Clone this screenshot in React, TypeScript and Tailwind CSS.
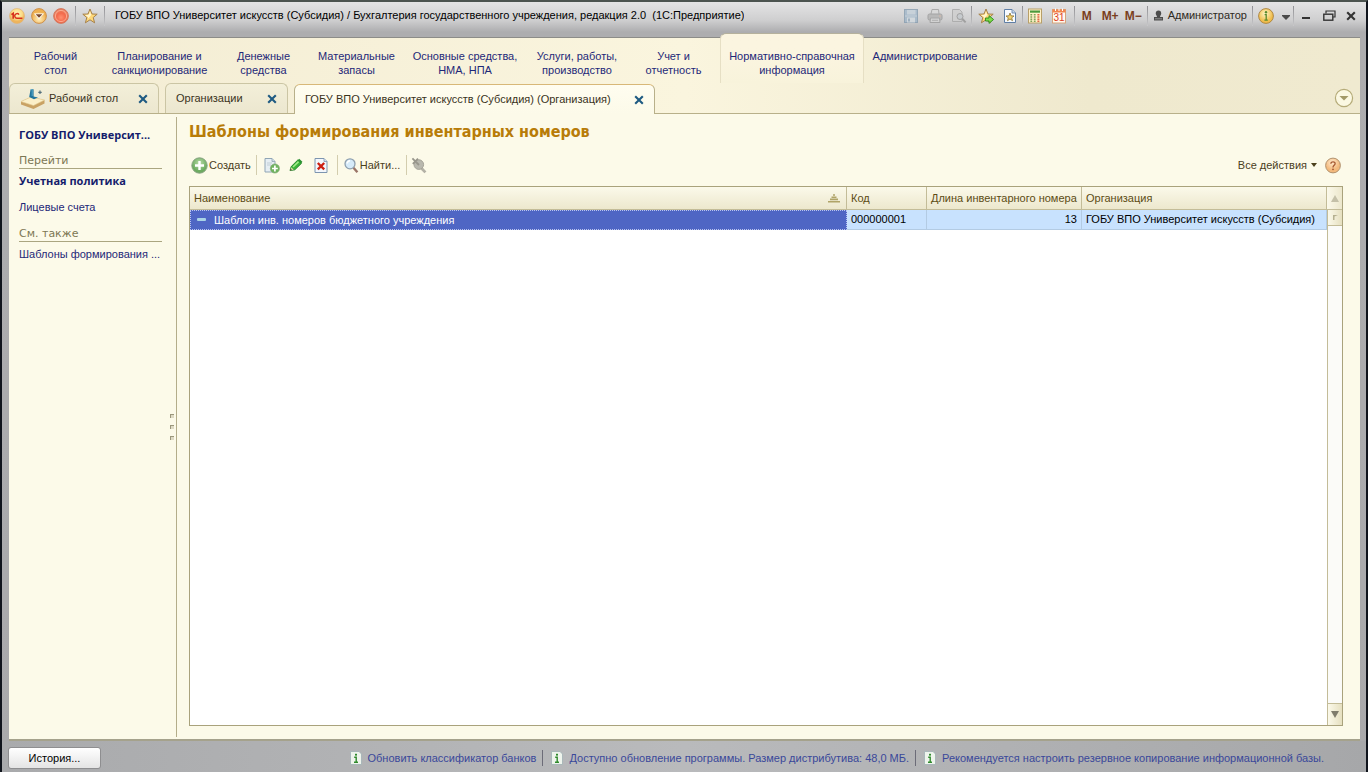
import React from 'react';
import clsx from 'clsx';

const sections = [
  { lines: ['Рабочий', 'стол'] },
  { lines: ['Планирование и', 'санкционирование'], width: 'w-[115px]' },
  { lines: ['Денежные', 'средства'] },
  { lines: ['Материальные', 'запасы'] },
  { lines: ['Основные средства,', 'НМА, НПА'], width: 'w-[124px]' },
  { lines: ['Услуги, работы,', 'производство'], width: 'w-[100px]' },
  { lines: ['Учет и', 'отчетность'] },
  { lines: ['Нормативно-справочная', 'информация'], width: 'w-[144px]', active: true },
  { lines: ['Администрирование'], width: 'w-[122px]' },
];

const messages = [
  'Обновить классификатор банков',
  'Доступно обновление программы. Размер дистрибутива: 48,0 МБ.',
  'Рекомендуется настроить резервное копирование информационной базы.',
];

const rows = [
  {
    name: 'Шаблон инв. номеров бюджетного учреждения',
    code: '000000001',
    length: 13,
    org: 'ГОБУ ВПО Университет искусств (Субсидия)',
  },
];

const OneCIcon = () => (
  <svg width="16" height="16" viewBox="0 0 16 16">
    <defs>
      <radialGradient id="logo" cx="50%" cy="35%">
        <stop offset="0" stopColor="#fff3b8" />
        <stop offset="0.7" stopColor="#fbdc86" />
        <stop offset="1" stopColor="#eeb45c" />
      </radialGradient>
    </defs>
    <circle cx="8" cy="8" r="7.5" fill="url(#logo)" stroke="#e0b070" strokeWidth="0.6" />
    <path d="M2.4 6.6 L4.2 5.4 V10.8" fill="none" stroke="#d8321c" strokeWidth="1.7" />
    <path d="M10 6.7 A2.3 2.3 0 1 0 8.4 10.2 H13.4" fill="none" stroke="#d8321c" strokeWidth="1.4" />
  </svg>
);

const MenuBall = () => (
  <svg width="16" height="16" viewBox="0 0 16 16">
    <defs>
      <radialGradient id="ball" cx="50%" cy="70%">
        <stop offset="0" stopColor="#fff0c0" />
        <stop offset="1" stopColor="#eeb050" />
      </radialGradient>
    </defs>
    <circle cx="8" cy="8" r="7.4" fill="url(#ball)" stroke="#c98a45" strokeWidth="0.9" />
    <path d="M2.8 5.4 H13.2 L8 11 Z" fill="#fff" />
    <path d="M4.6 6.3 H11.4 L8 9.8 Z" fill="#7d4a2a" />
  </svg>
);

const RedBall = () => (
  <svg width="16" height="16" viewBox="0 0 16 16">
    <defs>
      <radialGradient id="red" cx="50%" cy="60%">
        <stop offset="0" stopColor="#ff9070" />
        <stop offset="0.6" stopColor="#f36a4c" />
        <stop offset="1" stopColor="#e88060" />
      </radialGradient>
    </defs>
    <circle cx="8" cy="8" r="7.4" fill="url(#red)" stroke="#d0745a" strokeWidth="0.9" />
    <circle cx="8" cy="8" r="5.6" fill="none" stroke="#ffb59a" strokeWidth="0.8" />
  </svg>
);

const Star = ({ arrow = false }: { arrow?: boolean }) => (
  <svg width="16" height="16" viewBox="0 0 16 16">
    <path
      d="M8 1 L10 6 L15.2 6.2 L11.2 9.5 L12.6 14.8 L8 11.8 L3.4 14.8 L4.8 9.5 L0.8 6.2 L6 6 Z"
      fill="#ffd97a"
      stroke="#a5804a"
      strokeWidth="1"
      strokeLinejoin="round"
    />
    <path d="M8 3.2 L9.2 7 L6.2 10.4 L5.9 9 L3 7 L6.8 6.8 Z" fill="#fff6cf" />
    {arrow && (
      <path d="M7.5 10 H11 V7.6 L15.6 11.5 L11 15.4 V13 H7.5 Z" fill="#7fdc4a" stroke="#2c8a1c" strokeWidth="0.9" />
    )}
  </svg>
);

const SaveIcon = () => (
  <svg width="16" height="16" viewBox="0 0 16 16" opacity="0.75">
    <rect x="1.5" y="1.5" width="13" height="13" fill="#9db4c8" stroke="#8199ad" />
    <rect x="4" y="2" width="8.5" height="4.5" fill="#c3d0da" />
    <path d="M2 8 H14" stroke="#c3d0da" />
    <rect x="4" y="9.5" width="8" height="5" fill="#d3dbe1" />
    <rect x="5" y="10.5" width="2" height="3" fill="#8fa6b9" />
  </svg>
);

const PrintIcon = () => (
  <svg width="16" height="16" viewBox="0 0 16 16" opacity="0.8">
    <path d="M4 6 L5 1.5 H11.5 L12 6" fill="#d9d9d9" stroke="#a0a0a0" />
    <rect x="1" y="6" width="14" height="6" rx="1.5" fill="#b3b3b3" stroke="#989898" />
    <path d="M3.5 10 H12.5 L13 14.5 H3 Z" fill="#d4d4d4" stroke="#9c9c9c" />
    <path d="M5 12.3 H11" stroke="#a8a8a8" />
    <circle cx="13" cy="8" r="0.7" fill="#e0b090" />
  </svg>
);

const PreviewIcon = () => (
  <svg width="16" height="16" viewBox="0 0 16 16" opacity="0.8">
    <path d="M1.5 1.5 H8.5 L11 4 V13.5 H1.5 Z" fill="#cfcfcf" stroke="#a6a6a6" />
    <circle cx="9" cy="8.5" r="3" fill="#c4c9cd" stroke="#959595" />
    <path d="M11.2 10.8 L14.6 14.4" stroke="#959595" strokeWidth="2" />
  </svg>
);

const FavPageIcon = () => (
  <svg width="14" height="16" viewBox="0 0 14 16">
    <path d="M1.5 1.5 H9 L12.5 5 V14.5 H1.5 Z" fill="#f8fbff" stroke="#5f7fa6" />
    <path d="M9 1.5 V5 H12.5" fill="#c5d7ea" stroke="#5f7fa6" strokeWidth="0.8" />
    <path d="M7 5 L8 7.8 L11 8 L8.7 9.8 L9.5 12.7 L7 11 L4.5 12.7 L5.3 9.8 L3 8 L6 7.8 Z" fill="#f6d36a" stroke="#8d7434" strokeWidth="0.8" />
  </svg>
);

const CalcIcon = () => (
  <svg width="14" height="16" viewBox="0 0 14 16">
    <rect x="0.5" y="1" width="13" height="14" fill="#fff2c9" stroke="#b89f68" />
    <rect x="2" y="2.5" width="10" height="2.2" fill="#4a9a3c" />
    {[6.2, 8.4, 10.6, 12.6].map((y) => (
      <g key={y}>
        <rect x="2.4" y={y} width="1.8" height="1.2" fill="#5e8f3f" />
        <rect x="5.8" y={y} width="1.8" height="1.2" fill="#5e8f3f" />
        <rect x="9.4" y={y} width="2" height="1.2" fill="#d9472a" />
      </g>
    ))}
  </svg>
);

const CalendarIcon = () => (
  <svg width="14" height="16" viewBox="0 0 14 16">
    <rect x="0.5" y="1.5" width="13" height="13.5" fill="#fff9ee" stroke="#d6a57c" />
    <rect x="0.5" y="1.5" width="13" height="3" fill="#f2854f" />
    <path d="M3.5 0.5 V3 M7 0.5 V3 M10.5 0.5 V3" stroke="#fff" />
    <text x="7" y="13.3" textAnchor="middle" fontFamily="Liberation Sans" fontSize="10" fill="#e0401e">31</text>
  </svg>
);

const UserIcon = () => (
  <svg width="11" height="12" viewBox="0 0 11 12">
    <circle cx="5.5" cy="3.2" r="2.7" fill="#4c4c4c" />
    <path d="M3.4 4.5 H7.6 L7 7 H10 V10.5 H1 V7 H4 Z" fill="#4c4c4c" />
    <path d="M2 8.8 H9" stroke="#b0b0b0" strokeWidth="0.7" />
  </svg>
);

const InfoBall = () => (
  <svg width="16" height="16" viewBox="0 0 16 16">
    <defs>
      <radialGradient id="info" cx="45%" cy="35%">
        <stop offset="0" stopColor="#fff6c8" />
        <stop offset="1" stopColor="#f0bd4c" />
      </radialGradient>
    </defs>
    <circle cx="8" cy="8" r="7.4" fill="url(#info)" stroke="#a8803c" strokeWidth="0.9" />
    <circle cx="8" cy="4.2" r="1.2" fill="#5a8a2c" />
    <path d="M6.6 6.7 H8.2 V12 M6.4 12.2 H9.8" fill="none" stroke="#5a8a2c" strokeWidth="1.3" />
  </svg>
);

const HelpBall = () => (
  <svg width="16" height="17" viewBox="0 0 16 17">
    <defs>
      <radialGradient id="help" cx="45%" cy="30%">
        <stop offset="0" stopColor="#ffe9cc" />
        <stop offset="1" stopColor="#f3b97c" />
      </radialGradient>
    </defs>
    <circle cx="8" cy="8.5" r="7.4" fill="url(#help)" stroke="#a88a68" strokeWidth="0.9" />
    <path d="M5.9 6.7 C5.9 4.2 10.2 4.3 10.1 6.7 C10.1 8.3 8 8.4 8 10.4" fill="none" stroke="#a5562e" strokeWidth="1.3" />
    <circle cx="8" cy="12.3" r="0.9" fill="#a5562e" />
  </svg>
);

const DesktopIcon = () => (
  <svg width="26" height="22" viewBox="0 0 26 22">
    <path d="M1 13.5 L11 9 L24.5 12 V15.5 L13.5 21 L1 16.5 Z" fill="#c9a264" />
    <path d="M1 13.5 L11 9 L24.5 12 L13.5 17.5 Z" fill="#fbefc8" stroke="#e3cb92" strokeWidth="0.6" />
    <path d="M10.6 1.2 H13.6 V8.4 L18 9.6 L14 11.2 L9.2 9 Z" fill="#23759c" />
    <path d="M11 1.6 H12.2 V8" fill="none" stroke="#5fb0d0" strokeWidth="0.9" />
    <path d="M20 2.6 V6 M18.3 4.3 H21.7" stroke="#55707c" strokeWidth="1.2" />
  </svg>
);

const CloseIcon = ({ color = '#1e5a82', size = 10 }: { color?: string; size?: number }) => (
  <svg width={size} height={size} viewBox="0 0 10 10">
    <path d="M1.2 1.2 L8.8 8.8 M8.8 1.2 L1.2 8.8" stroke={color} strokeWidth="2.1" />
  </svg>
);

const CreateIcon = () => (
  <svg width="17" height="17" viewBox="0 0 17 17">
    <defs>
      <radialGradient id="create" cx="50%" cy="35%">
        <stop offset="0" stopColor="#b9dca8" />
        <stop offset="1" stopColor="#6cab60" />
      </radialGradient>
    </defs>
    <circle cx="8.5" cy="8.5" r="7.7" fill="url(#create)" stroke="#86a280" strokeWidth="1" />
    <path d="M8.5 4 V13 M4 8.5 H13" stroke="#fff" strokeWidth="2.4" />
  </svg>
);

const CopyIcon = () => (
  <svg width="16" height="17" viewBox="0 0 16 17">
    <path d="M1 1.5 H8 L11 4.5 V15 H1 Z" fill="#e6eef3" stroke="#90a5b5" />
    <path d="M8 1.5 V4.5 H11" fill="#cfdce6" stroke="#90a5b5" strokeWidth="0.8" />
    <path d="M3 6 H8 M3 8 H7" stroke="#c0cdd6" />
    <circle cx="10.9" cy="11.5" r="4.6" fill="#6fb35f" stroke="#7fa777" strokeWidth="0.6" />
    <path d="M10.9 8.6 V14.4 M8 11.5 H13.8" stroke="#fff" strokeWidth="1.7" />
  </svg>
);

const EditIcon = () => (
  <svg width="14" height="14" viewBox="0 0 14 14">
    <path d="M1 12.6 L2.2 8.6 L8.8 2 L12.4 5.4 L5.8 11.8 Z" fill="#3cb43a" stroke="#1f7d25" strokeWidth="0.9" />
    <path d="M4 9 L9.6 3.6" stroke="#a4ec8a" strokeWidth="1.5" />
    <path d="M8.6 2.2 L10.2 0.8 L13.4 3.8 L12.2 5.4 Z" fill="#2a9131" />
    <path d="M1 12.6 L2.2 9.2 L4.8 11.7 Z" fill="#d8d8a0" />
    <path d="M1 12.6 L1.6 10.8 L2.8 12.1 Z" fill="#333" />
  </svg>
);

const DeleteIcon = () => (
  <svg width="14" height="17" viewBox="0 0 14 17">
    <path d="M1 1.5 H10 L13 4.5 V15.5 H1 Z" fill="#f3f7fc" stroke="#7d95b0" />
    <path d="M10 1.5 V4.5 H13" fill="#d4e0ec" stroke="#7d95b0" strokeWidth="0.8" />
    <path d="M3.8 6 L10.2 12.4 M10.2 6 L3.8 12.4" stroke="#cc1f12" strokeWidth="2.3" />
  </svg>
);

const FindIcon = () => (
  <svg width="15" height="17" viewBox="0 0 15 17">
    <path d="M9.5 10.8 L13.4 15.2" stroke="#9a7468" strokeWidth="2.4" />
    <circle cx="6" cy="6.8" r="5" fill="#d6ebfa" stroke="#8e9fae" strokeWidth="1.3" />
    <path d="M3.2 6.5 A3 3 0 0 1 6 3.8" fill="none" stroke="#fff" strokeWidth="1.4" />
  </svg>
);

const ClearFindIcon = () => (
  <svg width="16" height="17" viewBox="0 0 16 17">
    <path d="M10 10.8 L14.4 15.4" stroke="#b3b1a6" strokeWidth="2.8" />
    <circle cx="7.8" cy="7.6" r="4.8" fill="#b9b8ae" stroke="#a5a398" />
    <path d="M1.4 1.4 L8 8 M7 1.6 L1.8 6.8" stroke="#98968c" strokeWidth="1.8" />
  </svg>
);

const NoticeIcon = () => (
  <svg width="12" height="14" viewBox="0 0 12 14">
    <path d="M0.5 0.5 H9 L11.5 3 V13.5 H0.5 Z" fill="#eef4ec" stroke="#9fb0b4" strokeWidth="0.8" />
    <rect x="5" y="2.8" width="2" height="1.8" fill="#2f8a2c" />
    <path d="M4.2 6.2 H6.2 V10.8 M4 11.2 H8" fill="none" stroke="#2f8a2c" strokeWidth="1.4" />
  </svg>
);

const Sep = () => <span className="h-5 w-px shrink-0 bg-linear-to-b from-[#909094] to-[#c8c8ca]" />;
const ToolSep = () => <span className="h-5 w-px shrink-0 bg-[#d3cdae]" />;

const IconButton = ({ label, className, children }: { label: string; className?: string; children: React.ReactNode }) => (
  <button type="button" aria-label={label} className={clsx('flex h-5 shrink-0 items-center justify-center', className)}>
    {children}
  </button>
);

const TitleBar = () => (
  <header className="flex h-[31px] items-center justify-between pr-1 pb-1 pl-[7px]">
    <div className="flex min-w-0 items-center">
      <div className="flex items-center gap-[6px]">
        <IconButton label="Главное меню"><OneCIcon /></IconButton>
        <IconButton label="Меню функций"><MenuBall /></IconButton>
        <IconButton label="Закрыть сеанс"><RedBall /></IconButton>
        <Sep />
        <IconButton label="Избранное"><Star /></IconButton>
        <Sep />
      </div>
      <h1 className="truncate pl-[10px] text-[11px] whitespace-pre text-black">
        {'ГОБУ ВПО Университет искусств (Субсидия) / Бухгалтерия государственного учреждения, редакция 2.0  (1С:Предприятие)'}
      </h1>
    </div>
    <div className="flex shrink-0 items-center text-[11px]">
      <IconButton label="Сохранить" className="w-6"><SaveIcon /></IconButton>
      <IconButton label="Печать" className="w-6"><PrintIcon /></IconButton>
      <IconButton label="Просмотр" className="w-6"><PreviewIcon /></IconButton>
      <Sep />
      <IconButton label="Добавить в избранное" className="ml-[2px] w-6"><Star arrow /></IconButton>
      <IconButton label="Ссылка" className="w-6"><FavPageIcon /></IconButton>
      <Sep />
      <IconButton label="Калькулятор" className="w-6"><CalcIcon /></IconButton>
      <IconButton label="Календарь" className="mr-[3px] w-6"><CalendarIcon /></IconButton>
      <Sep />
      <div className="flex w-[72px] items-center pl-[7px] text-xs font-bold text-[#7a3f1e]">
        <button type="button" className="mr-[10px]">M</button>
        <button type="button" className="mr-[6px]">M+</button>
        <button type="button">M−</button>
      </div>
      <Sep />
      <button type="button" className="flex items-center gap-1 px-[5px] text-[#2e2a22]">
        <UserIcon />
        Администратор
      </button>
      <Sep />
      <IconButton label="Информация" className="w-[26px]"><InfoBall /></IconButton>
      <IconButton label="Параметры" className="w-[14px] pt-1">
        <svg width="8" height="5" viewBox="0 0 8 5"><path d="M0 0 H8 V1 L4 5 L0 1 Z" fill="#4a4a4a" /></svg>
      </IconButton>
      <Sep />
      <IconButton label="Свернуть" className="w-6 pt-1">
        <svg width="8" height="2" viewBox="0 0 8 2"><path d="M0 1 H8" stroke="#333" strokeWidth="2" /></svg>
      </IconButton>
      <IconButton label="Восстановить" className="w-[22px]">
        <svg width="13" height="11" viewBox="0 0 13 11">
          <path d="M3 3.6 V1 H12 V7 H10" fill="none" stroke="#333" strokeWidth="1.2" />
          <rect x="0.8" y="4.2" width="9" height="6" fill="none" stroke="#333" strokeWidth="1.4" />
        </svg>
      </IconButton>
      <IconButton label="Закрыть" className="w-[22px]"><CloseIcon color="#333" /></IconButton>
    </div>
  </header>
);

const Sections = () => (
  <nav className="flex h-[50px] items-end">
    {sections.map((s) => (
      <a
        key={s.lines[0]}
        href="#"
        className={clsx(
          'flex flex-col items-center text-center text-[11px] leading-[14px] whitespace-nowrap text-[#1e2878]',
          s.width ?? 'w-[93px]',
          s.active
            ? 'h-[50px] rounded-t-md border-x border-t border-x-[#e6dfc4] border-t-[#b5b19c] bg-linear-to-b from-[#fbf5e0] from-40% to-[#f8f3db] pt-[15px]'
            : 'h-[46px] pt-3'
        )}
      >
        {s.lines.map((l) => <span key={l}>{l}</span>)}
      </a>
    ))}
  </nav>
);

const tabClass = 'flex h-[30px] items-center justify-between rounded-t-md border-x border-t px-[10px] text-[11px] whitespace-nowrap text-[#3a331c]';
const idleTab = 'border-[#cbc5a4] bg-linear-to-b from-[#f3efd9] to-[#ece7cf]';

const Tabs = () => (
  <div className="flex items-end justify-between border-b border-[#b8b08a]">
    <div className="flex items-end gap-[6px]">
      <div className={clsx(tabClass, idleTab, 'w-[150px]')}>
        <a href="#" className="flex items-center gap-[3px]"><DesktopIcon />Рабочий стол</a>
        <button type="button" aria-label="Закрыть Рабочий стол"><CloseIcon /></button>
      </div>
      <div className={clsx(tabClass, idleTab, 'w-[123px]')}>
        <a href="#">Организации</a>
        <button type="button" aria-label="Закрыть Организации"><CloseIcon /></button>
      </div>
      <div className={clsx(tabClass, '-mb-px w-[361px] border-x-[#b8b08a] border-t-[#d8b878] bg-linear-to-b from-[#fffdf0] to-[#fcfae9]')}>
        <a href="#">ГОБУ ВПО Университет искусств (Субсидия) (Организация)</a>
        <button type="button" aria-label="Закрыть Организация"><CloseIcon /></button>
      </div>
    </div>
    <button type="button" aria-label="Список окон" className="mr-[6px] mb-[5px]">
      <svg width="20" height="20" viewBox="0 0 20 20">
        <circle cx="10" cy="10" r="8.6" fill="#fbf8e2" stroke="#b5ab78" strokeWidth="1.2" />
        <path d="M5.5 8 H14.5 L10 12.6 Z" fill="#a39a68" />
      </svg>
    </button>
  </div>
);

const sideHead = "h-[17px] border-b border-[#aaa580] pt-px font-['DejaVu_Sans',sans-serif] font-medium text-[#7c7754]";
const sideBold = "font-['Open_Sans',sans-serif] font-bold text-[#141c6c]";

const Sidebar = () => (
  <aside className="mt-[3px] mb-[2px] flex w-[168px] shrink-0 border-r border-[#b4ad8a] pl-[10px]">
    <nav className="flex w-[143px] flex-col text-[11px] leading-4 whitespace-nowrap text-[#1e2878]">
      <a href="#" className={clsx(sideBold, 'mt-[10px]')}>ГОБУ ВПО Университ...</a>
      <h3 className={clsx(sideHead, 'mt-[9px]')}>Перейти</h3>
      <a href="#" className={clsx(sideBold, 'mt-1')}>Учетная политика</a>
      <a href="#" className="mt-[10px]">Лицевые счета</a>
      <h3 className={clsx(sideHead, 'mt-[10px]')}>См. также</h3>
      <a href="#" className="mt-1">Шаблоны формирования ...</a>
    </nav>
    <div className="ml-2 flex flex-col justify-center gap-[7px]">
      {[0, 1, 2].map((i) => (
        <span key={i} className="size-1 border-t border-l border-[#9b977c] bg-[#dedac4]" />
      ))}
    </div>
  </aside>
);

const Toolbar = () => (
  <div className="flex h-6 items-center justify-between pl-[2px] text-[11px] text-[#4b401c]">
    <div className="flex items-center">
      <button type="button" className="mr-[5px] flex items-center gap-px"><CreateIcon />Создать</button>
      <ToolSep />
      <IconButton label="Скопировать" className="ml-[3px] w-6"><CopyIcon /></IconButton>
      <IconButton label="Изменить" className="w-6"><EditIcon /></IconButton>
      <IconButton label="Удалить" className="mr-[3px] w-[26px]"><DeleteIcon /></IconButton>
      <ToolSep />
      <button type="button" className="mx-[6px] flex items-center gap-px"><FindIcon />Найти...</button>
      <ToolSep />
      <IconButton label="Отменить поиск" className="w-6"><ClearFindIcon /></IconButton>
    </div>
    <div className="flex items-center gap-2 pr-[2px]">
      <button type="button" className="flex items-center gap-1">
        Все действия
        <svg width="6" height="4" viewBox="0 0 6 4"><path d="M0 0 H6 L3 4 Z" fill="#4b401c" /></svg>
      </button>
      <IconButton label="Справка"><HelpBall /></IconButton>
    </div>
  </div>
);

const headClass = 'h-[23px] border-r border-b border-[#c3bc98] px-1 text-left font-normal whitespace-nowrap text-[#5c4c14]';

const Grid = () => (
  <div className="flex flex-1 border border-[#a9a27c] bg-white">
    <div className="min-w-0 flex-1">
      <table className="w-full table-fixed border-separate border-spacing-0 text-[11px]">
        <thead className="bg-linear-to-b from-[#fbf9ea] to-[#ece7cc]">
          <tr>
            <th className={headClass}>
              <div className="flex items-center justify-between">
                Наименование
                <svg width="12" height="9" viewBox="0 0 12 9" className="mr-[2px]">
                  <path d="M5 1 H7 M3.5 3.2 H8.5 M2 5.4 H10 M0 7.8 H12" stroke="#b0a468" strokeWidth="1.6" />
                </svg>
              </div>
            </th>
            <th className={clsx(headClass, 'w-[80px]')}>Код</th>
            <th className={clsx(headClass, 'w-[155px]')}>Длина инвентарного номера</th>
            <th className={clsx(headClass, 'w-[245px]')}>Организация</th>
          </tr>
        </thead>
        <tbody>
          {rows.map((r) => (
            <tr key={r.code} className="bg-[#c8e2fe] text-black">
              <td className="h-5 border border-dotted border-[#b9c4f0] bg-[#4f66c4] px-[6px] text-white">
                <div className="flex items-center gap-2">
                  <svg width="9" height="4" viewBox="0 0 9 4"><rect width="9" height="3" rx="1" fill="#a9d4e6" /></svg>
                  {r.name}
                </div>
              </td>
              <td className="border-r border-b border-[#b3cbe3] px-1">{r.code}</td>
              <td className="border-r border-b border-[#b3cbe3] px-1 text-right">{r.length}</td>
              <td className="border-r border-b border-[#b3cbe3] px-1 whitespace-nowrap">{r.org}</td>
            </tr>
          ))}
        </tbody>
      </table>
    </div>
    <div className="flex w-[15px] shrink-0 flex-col bg-[#fbfbf8]">
      <button type="button" aria-label="Вверх" className="flex h-[23px] items-center justify-center border-b border-[#c3bc98] bg-linear-to-r from-[#fbf9ea] to-[#ece7cc]">
        <svg width="8" height="7" viewBox="0 0 8 7"><path d="M0 7 L4 0 L8 7 Z" fill="#c4c0a8" /></svg>
      </button>
      <div className="flex h-4 items-center justify-center border-b border-l border-[#c3bc98] bg-linear-to-r from-[#fbf9ea] to-[#e6e0c0]">
        <svg width="5" height="5" viewBox="0 0 5 5"><path d="M0 0 H5 L1.5 1.5 V5 H0 Z" fill="#b5b090" /></svg>
      </div>
      <div className="flex-1 border-l border-[#c3bc98]" />
      <button type="button" aria-label="Вниз" className="flex h-[22px] items-center justify-center border-t border-l border-[#c3bc98] bg-linear-to-r from-[#fbf9ea] to-[#e6e0c0]">
        <svg width="8" height="7" viewBox="0 0 8 7"><path d="M0 0 L4 7 L8 0 Z" fill="#7f7c6c" /></svg>
      </button>
    </div>
  </div>
);

const StatusBar = () => (
  <footer className="flex h-[31px] items-center justify-between bg-linear-to-r from-[#a9aaac] via-[#b9babc] to-[#a6a7a9] px-[6px] pt-[3px] text-[11px]">
    <button type="button" className="h-[22px] w-[93px] rounded-[3px] border border-[#8e8e90] bg-linear-to-b from-white to-[#e4e4e4] text-black">
      История...
    </button>
    <div className="flex items-center pr-9">
      {messages.map((m, i) => (
        <a
          key={m}
          href="#"
          className={clsx('flex items-center gap-[6px] whitespace-nowrap text-[#3a489a]', i > 0 && 'ml-[6px] border-l border-[#6c6c78] pl-[8px]')}
        >
          <NoticeIcon />
          {m}
        </a>
      ))}
    </div>
  </footer>
);

const App: React.FC = () => (
  <div className="flex min-h-screen flex-col border-x-2 border-t-2 border-x-[#10141c] border-t-[#4c5450] bg-[linear-gradient(to_bottom,#e4e4e5,#cfcfd0_18px,#adadaf_30px,#a9a9ab)] font-['Liberation_Sans',Arial,sans-serif]">
    <TitleBar />
    <div className="flex flex-1 flex-col pr-[6px] pl-[7px]">
      {/* the active section tab rises above the panel's top edge */}
      <div className="bg-[linear-gradient(to_bottom,transparent_4px,#8c8c88_4px,#8c8c88_5px,transparent_5px),linear-gradient(to_right,#f3ecd3,#faf5de_50%,#efe9ce_80%,#f0ead0)] bg-[position:0_0,0_5px] bg-no-repeat">
        <Sections />
        <Tabs />
      </div>
      <div className="flex flex-1 border-b-2 border-[#a5a28c] bg-[#fcfae9]">
        <Sidebar />
        <main className="flex min-w-0 flex-1 flex-col pr-[17px] pb-[13px] pl-3">
          <h2 className="mt-[6px] mb-[9px] font-['DejaVu_Sans_Condensed',sans-serif] text-[16px] leading-6 font-bold text-[#b87c08]">
            Шаблоны формирования инвентарных номеров
          </h2>
          <Toolbar />
          <div className="mt-[9px] flex flex-1 flex-col"><Grid /></div>
        </main>
      </div>
    </div>
    <StatusBar />
  </div>
);

export default App;
